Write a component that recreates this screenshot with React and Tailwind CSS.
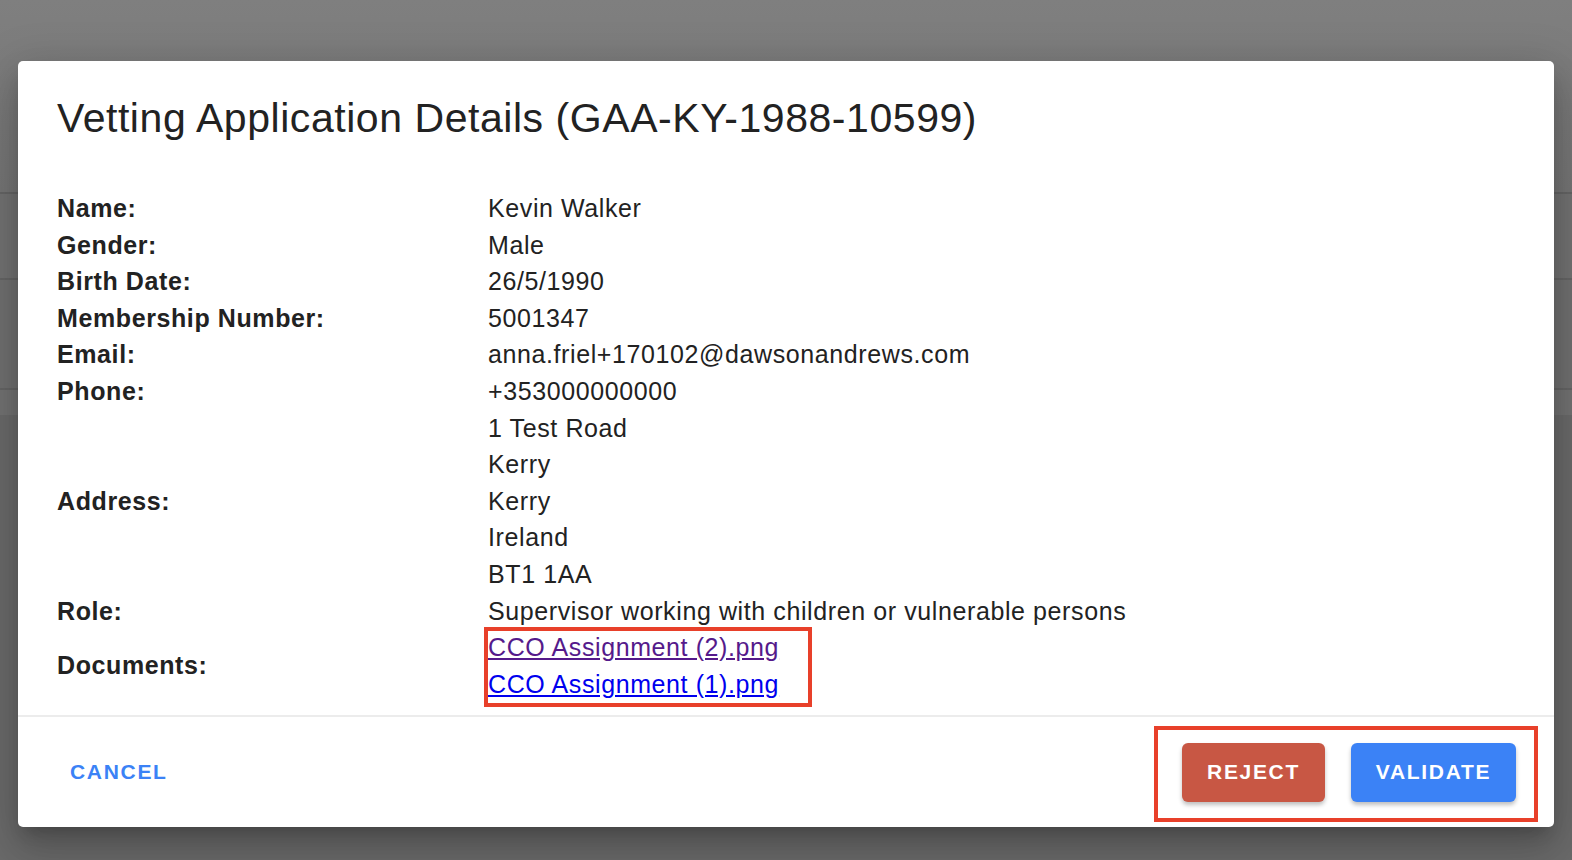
export default function App() {
  const rows = [
    ["Name:", ["Kevin Walker"]],
    ["Gender:", ["Male"]],
    ["Birth Date:", ["26/5/1990"]],
    ["Membership Number:", ["5001347"]],
    ["Email:", ["anna.friel+170102@dawsonandrews.com"]],
    ["Phone:", ["+353000000000"]],
    ["Address:", ["1 Test Road", "Kerry", "Kerry", "Ireland", "BT1 1AA"]],
    ["Role:", ["Supervisor working with children or vulnerable persons"]],
  ];
  return (
    <div className="relative w-[1572px] h-[860px] overflow-hidden bg-[#7a7a7a] font-['Liberation_Sans',Arial,sans-serif]">
      <div className="absolute inset-0 flex flex-col">
        <div className="h-[192px] bg-gradient-to-b from-[#7f7f7f] to-[#767676]" />
        <div className="h-[2px] bg-[#666]" />
        <div className="h-[84px] bg-[#737373]" />
        <div className="h-[2px] bg-[#666]" />
        <div className="h-[108px] bg-[#717171]" />
        <div className="h-[2px] bg-[#666]" />
        <div className="h-[25px] bg-[#737373]" />
        <div className="flex-1 bg-[#6b6b6b]" />
      </div>
      <div className="absolute left-[18px] top-[61px] w-[1536px] h-[766px] bg-white rounded-[5px] shadow-[0_11px_15px_-7px_rgba(0,0,0,0.2),0_24px_38px_3px_rgba(0,0,0,0.14),0_9px_46px_8px_rgba(0,0,0,0.12)] flex flex-col">
        <h2 className="px-[39px] pt-[31px] text-[41px] leading-[52px] tracking-[0.55px] text-[#222] font-normal">
          Vetting Application Details (GAA-KY-1988-10599)
        </h2>
        <div className="px-[39px] pt-[46px] text-[25px] leading-[36.6px] tracking-[0.6px] text-[#222] flex-1">
          {rows.map(([label, vals]) => (
            <div key={label} className="flex">
              <div className="w-[431px] font-bold flex items-center">{label}</div>
              <div className="flex flex-col">
                {vals.map((v, i) => (
                  <div key={i}>{v}</div>
                ))}
              </div>
            </div>
          ))}
          <div className="flex">
            <div className="w-[431px] font-bold flex items-center">Documents:</div>
            <div className="flex flex-col">
              <a href="#" className="underline text-[#551a8b]">CCO Assignment (2).png</a>
              <a href="#" className="underline text-[#0000ee]">CCO Assignment (1).png</a>
            </div>
          </div>
        </div>
        <div className="h-[2px] bg-[#ececec]" />
        <div className="h-[110px] flex items-center justify-between pl-[52px] pr-[38px]">
          <button className="text-[21px] font-bold tracking-[0.08em] text-[#3b82f6]">CANCEL</button>
          <div className="flex gap-[26px]">
            <button className="w-[143px] h-[59px] rounded-[6px] bg-[#c85744] text-white text-[21px] font-bold tracking-[0.08em] shadow-[0_3px_4px_rgba(0,0,0,0.25)]">REJECT</button>
            <button className="w-[165px] h-[59px] rounded-[6px] bg-[#3b82f6] text-white text-[21px] font-bold tracking-[0.08em] shadow-[0_3px_4px_rgba(0,0,0,0.25)]">VALIDATE</button>
          </div>
        </div>
      </div>
      <div className="absolute left-[484px] top-[627px] w-[328px] h-[80px] border-[4px] border-[#e8402a]" />
      <div className="absolute left-[1154px] top-[726px] w-[384px] h-[96px] border-[4px] border-[#e8402a]" />
    </div>
  );
}
